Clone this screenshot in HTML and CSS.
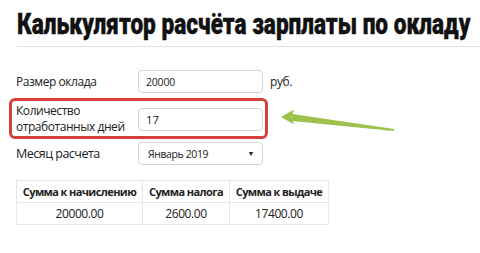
FILE: index.html
```html
<!DOCTYPE html>
<html lang="ru">
<head>
<meta charset="utf-8">
<link rel="stylesheet" href="styles.css">
</head>
<body>
<div class="page">
  <h1 class="title"><span class="title-text">Калькулятор расчёта зарплаты по окладу</span></h1>
  <div class="form">
    <div class="row row-1">
      <label class="label">Размер оклада</label>
      <div class="field">20000</div>
      <span class="unit">руб.</span>
    </div>
    <div class="row row-hl">
      <label class="label">Количество<br>отработанных дней</label>
      <div class="field field-big">17</div>
    </div>
    <div class="row row-3">
      <label class="label label-big">Месяц расчета</label>
      <div class="field field-select"><span>Январь 2019</span><span class="caret">▼</span></div>
    </div>
  </div>
  <table class="result">
    <tr><th>Сумма к начислению</th><th>Сумма налога</th><th>Сумма к выдаче</th></tr>
    <tr><td>20000.00</td><td>2600.00</td><td>17400.00</td></tr>
  </table>
  <svg class="arrow" width="120" height="30" viewBox="0 0 120 30">
    <path d="M12 7 L114 22 L113.5 24 L12 14 Z" fill="#9dc24c"/>
    <path d="M1 10 L14 2.5 L11.5 10 L14 17.5 Z" fill="#9dc24c"/>
  </svg>
</div>
</body>
</html>
```
FILE: styles.css
```css
html, body { margin: 0; padding: 0; background: #fff; }
.page {
  position: relative;
  width: 480px;
  height: 253px;
  overflow: hidden;
  font-family: "Open Sans", "Liberation Sans", sans-serif;
  color: #222;
}
.title {
  margin: 0 0 0 17px;
  padding: 11px 0 8px;
  border-bottom: 1px solid #e2e2e2;
  font-family: Roboto, "Liberation Sans", sans-serif;
  font-weight: 900;
  font-size: 29px;
  line-height: 27px;
  color: #111;
  white-space: nowrap;
}
.title-text {
  display: inline-block;
  transform: scaleX(0.78);
  transform-origin: left center;
  -webkit-text-stroke: 0.4px #111;
}
.form {
  display: flex;
  flex-direction: column;
  margin-top: 23px;
}
.row {
  display: flex;
  align-items: center;
  padding-left: 16px;
}
.label {
  width: 122px;
  font-size: 12px;
  letter-spacing: -0.45px;
  line-height: 16px;
  color: #222;
}
.label-big { font-size: 12.5px; letter-spacing: -0.5px; }
.field {
  box-sizing: border-box;
  width: 125px;
  height: 23px;
  border: 1px solid #d4d4d4;
  border-radius: 4px;
  padding: 0 7px;
  display: flex;
  align-items: center;
  font-size: 10.5px;
  letter-spacing: -0.2px;
  color: #222;
}
.field-big { font-size: 11.5px; }
.field-select { justify-content: space-between; padding: 0 8px 0 9px; letter-spacing: -0.4px; }
.caret { font-size: 7px; color: #222; }
.unit { margin-left: 7px; font-size: 12px; letter-spacing: -0.4px; }
.row-hl {
  margin: 5px 0 0 9px;
  width: 259px;
  box-sizing: border-box;
  height: 41px;
  padding: 1px 0 0 4px;
  border: 3px solid #d3413a;
  border-radius: 6px;
}
.row-3 { margin-top: 3px; }
.result {
  margin: 15px 0 0 16px;
  border-collapse: collapse;
  color: #222;
  white-space: nowrap;
}
.result th, .result td {
  border: 1px solid #e6e6e6;
  height: 21px;
  padding: 0;
  text-align: center;
}
.result th { font-weight: 700; font-size: 11px; letter-spacing: -0.6px; }
.result td { font-size: 12px; letter-spacing: -0.4px; }
.result th:nth-child(1) { width: 125px; }
.result th:nth-child(2) { width: 86px; }
.result th:nth-child(3) { width: 98px; }
.arrow {
  position: absolute;
  left: 280px;
  top: 107px;
}
```
